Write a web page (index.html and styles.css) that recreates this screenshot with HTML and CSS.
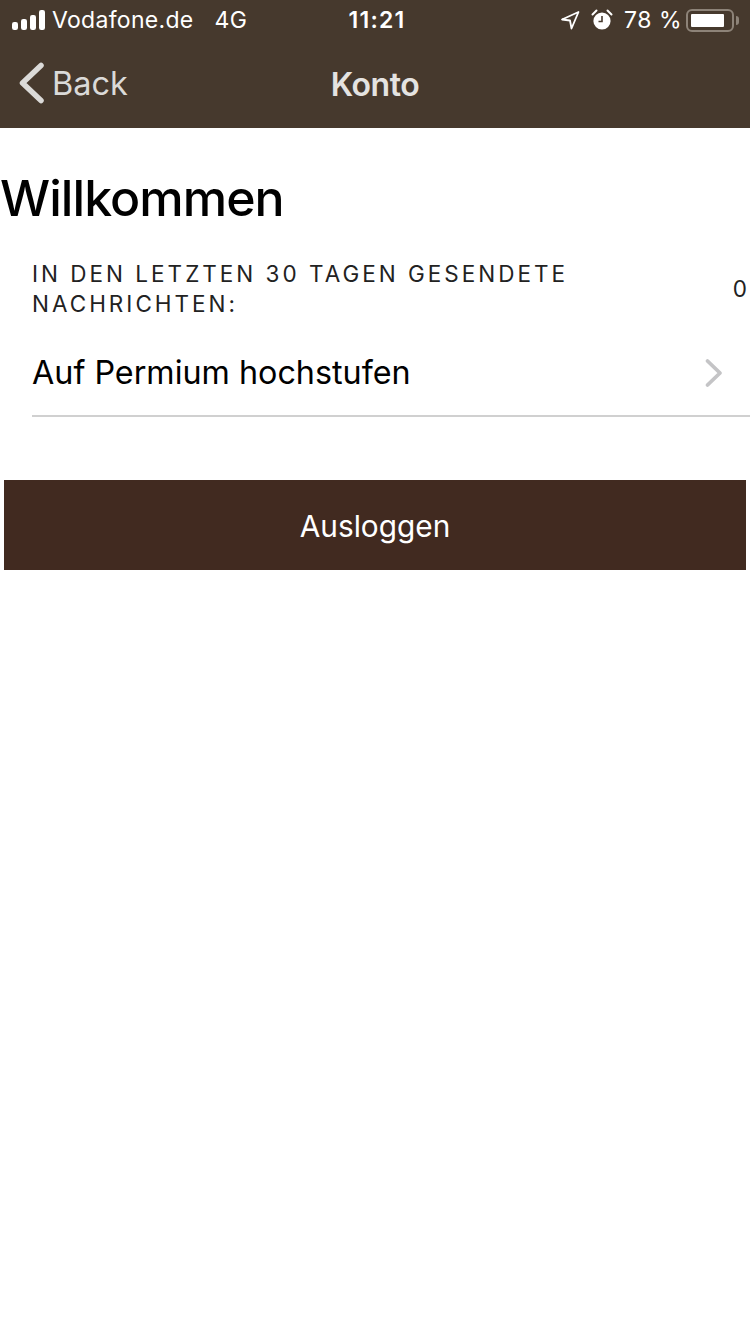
FILE: index.html
```html
<!DOCTYPE html>
<html lang="de">
<head>
    <meta charset="UTF-8">
    <meta name="viewport" content="width=device-width, initial-scale=1.0">
    <title>Konto</title>
    <link rel="stylesheet" href="styles.css">
</head>
<body>
    <header class="topbar">
        <div class="status">
            <div class="status-left">
                <svg class="signal" width="33" height="20" viewBox="0 0 33 20">
                    <rect x="0" y="12" width="6" height="8" rx="2.2"/>
                    <rect x="9" y="9" width="6" height="11" rx="2.2"/>
                    <rect x="18" y="5" width="6" height="15" rx="2.2"/>
                    <rect x="27" y="0" width="6" height="20" rx="2.2"/>
                </svg>
                <span class="carrier">Vodafone.de</span>
                <span class="network">4G</span>
            </div>
            <div class="clock">11:21</div>
            <div class="status-right">
                <svg class="arrow" width="20" height="20" viewBox="0 0 20 20">
                    <path d="M18.5 2 L2 9.5 L10 10.5 L11.5 18.5 Z" fill="none" stroke="#fff" stroke-width="1.8" stroke-linejoin="round"/>
                </svg>
                <svg class="alarm" width="22" height="22" viewBox="0 0 22 22">
                    <circle cx="11" cy="12" r="8.6" fill="#fff"/>
                    <path d="M11 7 V12.5 H7.5" fill="none" stroke="#46392d" stroke-width="1.6"/>
                    <path d="M1.5 5.5 L5.5 1.5 M20.5 5.5 L16.5 1.5" stroke="#fff" stroke-width="2" stroke-linecap="round"/>
                </svg>
                <span class="percent">78 %</span>
                <div class="battery">
                    <div class="battery-level"></div>
                </div>
                <div class="battery-tip"></div>
            </div>
        </div>
        <nav class="navbar">
            <a class="back">
                <svg width="28" height="44" viewBox="0 0 28 44">
                    <path d="M23 4.500 L4.500 22 L23 39.500" fill="none" stroke="#dbdad8" stroke-width="5.500" stroke-linecap="round" stroke-linejoin="round"/>
                </svg>
                <span>Back</span>
            </a>
            <h2 class="nav-title">Konto</h2>
        </nav>
    </header>

    <main>
        <h1>Willkommen</h1>
        <div class="stat-row">
            <div class="stat-label">In den letzten 30 Tagen gesendete Nachrichten:</div>
            <div class="stat-value">0</div>
        </div>
        <a class="list-row">
            <span>Auf Permium hochstufen</span>
            <svg width="20" height="30" viewBox="0 0 20 30">
                <path d="M3.500 3 L16 15 L3.500 27" fill="none" stroke="#c4c4c6" stroke-width="3.800" stroke-linecap="round" stroke-linejoin="round"/>
            </svg>
        </a>
        <button class="logout">Ausloggen</button>
    </main>
</body>
</html>
```

FILE: styles.css
```css
* {
    box-sizing: border-box;
}
body {
    margin: 0;
    background: white;
    font-family: Inter, "Liberation Sans", sans-serif;
    color: black;
}
.topbar {
    height: 128px;
    background: #46392d;
    color: white;
}
.status {
    display: grid;
    grid-template-columns: 1fr auto 1fr;
    align-items: center;
    height: 40px;
    padding: 0 8px 0 12px;
    font-size: 23px;
    letter-spacing: 0.3px;
}
.status-left {
    display: flex;
    align-items: center;
}
.signal {
    fill: white;
    margin-right: 7px;
}
.network {
    margin-left: 21px;
}
.clock {
    font-weight: 600;
    letter-spacing: 1.2px;
}
.status-right {
    display: flex;
    align-items: center;
    justify-content: flex-end;
    padding-right: 3px;
}
.alarm {
    margin-left: 11px;
}
.percent {
    margin-left: 11px;
    letter-spacing: 0.5px;
}
.battery {
    width: 48px;
    height: 23px;
    margin-left: 4px;
    padding: 3px;
    border: 2px solid #8d8378;
    border-radius: 6px;
}
.battery-level {
    width: 33px;
    height: 100%;
    background: white;
    border-radius: 1px;
}
.battery-tip {
    width: 3px;
    height: 9px;
    margin-left: 2px;
    background: #8d8378;
    border-radius: 0 3px 3px 0;
}
.navbar {
    display: flex;
    align-items: center;
    justify-content: center;
    position: relative;
    height: 88px;
}
.back {
    position: absolute;
    left: 18px;
    top: 21px;
    display: flex;
    align-items: center;
    gap: 6px;
    color: #dbdad8;
    font-size: 32.500px;
}
.nav-title {
    margin: 0;
    color: #e4e3e1;
    font-size: 32px;
    font-weight: 600;
    letter-spacing: -0.5px;
}
h1 {
    margin: 0;
    padding: 40px 0 0;
    font-size: 50px;
    font-weight: 500;
    line-height: 60px;
    letter-spacing: -0.95px;
}
.stat-row {
    display: flex;
    align-items: center;
    justify-content: space-between;
    padding: 31px 3px 0 32px;
}
.stat-label {
    width: 570px;
    color: #222;
    font-size: 22.500px;
    line-height: 29.500px;
    letter-spacing: 3px;
    text-transform: uppercase;
}
.stat-value {
    color: #222;
    font-size: 22.500px;
}
.list-row {
    display: flex;
    align-items: center;
    justify-content: space-between;
    height: 99px;
    margin-left: 32px;
    padding: 12px 26px 0 0;
    border-bottom: 2px solid #d0d0d0;
    font-size: 32.300px;
}
.logout {
    display: block;
    width: 742px;
    height: 90px;
    margin: 63px 4px 0;
    padding-top: 2px;
    border: none;
    background: #412a20;
    color: white;
    font-family: inherit;
    font-size: 29.800px;
}
```
